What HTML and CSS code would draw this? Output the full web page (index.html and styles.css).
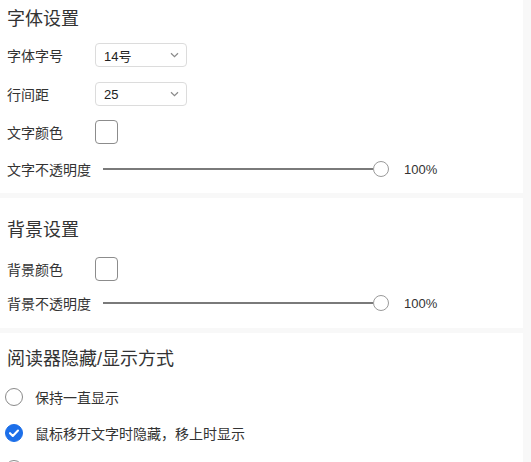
FILE: index.html
```html
<!DOCTYPE html>
<html lang="zh-CN">
<head>
<meta charset="utf-8">
<link rel="stylesheet" href="styles.css">
</head>
<body>
<div class="panel">
  <section class="section sec-font">
    <div class="title">字体设置</div>
    <div class="rows">
      <div class="row tall">
        <span class="label">字体字号</span>
        <div class="select"><span>14号</span><svg class="chev" width="9" height="6" viewBox="0 0 9 6"><path d="M1 1.2 L4.5 4.6 L8 1.2" fill="none" stroke="#8a8a8a" stroke-width="1.2"/></svg></div>
      </div>
      <div class="row tall">
        <span class="label">行间距</span>
        <div class="select"><span>25</span><svg class="chev" width="9" height="6" viewBox="0 0 9 6"><path d="M1 1.2 L4.5 4.6 L8 1.2" fill="none" stroke="#8a8a8a" stroke-width="1.2"/></svg></div>
      </div>
      <div class="row">
        <span class="label">文字颜色</span>
        <div class="swatch"></div>
      </div>
      <div class="row">
        <span class="label-auto">文字不透明度</span>
        <div class="slider"><div class="track"></div><div class="thumb"></div></div>
        <span class="value">100%</span>
      </div>
    </div>
  </section>
  <section class="section sec-bg">
    <div class="title">背景设置</div>
    <div class="rows">
      <div class="row">
        <span class="label">背景颜色</span>
        <div class="swatch"></div>
      </div>
      <div class="row">
        <span class="label-auto">背景不透明度</span>
        <div class="slider"><div class="track"></div><div class="thumb"></div></div>
        <span class="value">100%</span>
      </div>
    </div>
  </section>
  <section class="section sec-mode">
    <div class="title">阅读器隐藏/显示方式</div>
    <div class="rows">
      <div class="radio-row"><span class="radio"></span><span class="radio-text">保持一直显示</span></div>
      <div class="radio-row"><span class="radio checked"><svg width="18" height="18" viewBox="0 0 18 18"><path d="M5 9.2 L7.8 12 L13 6.6" fill="none" stroke="#fff" stroke-width="2.1" stroke-linecap="round" stroke-linejoin="round"/></svg></span><span class="radio-text">鼠标移开文字时隐藏，移上时显示</span></div>
      <div class="radio-row"><span class="radio"></span><span class="radio-text">鼠标移开窗口时隐藏，移上时显示</span></div>
    </div>
  </section>
</div>
</body>
</html>
```
FILE: styles.css
```css
html, body {
  margin: 0;
  padding: 0;
}
body {
  background: #f8f8f8;
  font-family: "Liberation Sans", "Noto Sans CJK SC", sans-serif;
  color: #333;
  height: 462px;
  overflow: hidden;
}
.panel {
  width: 523px;
  display: flex;
  flex-direction: column;
  gap: 5px;
}
.section {
  background: #fff;
  padding-left: 7px;
  padding-right: 7px;
}
.title {
  height: 24px;
  line-height: 24px;
  font-size: 18px;
  color: #333;
}
.rows {
  display: flex;
  flex-direction: column;
}
.sec-font { padding-top: 7px; padding-bottom: 12px; }
.sec-font .rows { gap: 13px; margin-top: 11px; }
.sec-bg { padding-top: 20px; padding-bottom: 13px; }
.sec-bg .rows { gap: 10px; margin-top: 15px; }
.sec-mode { padding-top: 14px; padding-bottom: 20px; }
.sec-mode .rows { gap: 16px; margin-top: 16px; }

.row {
  height: 24px;
  display: flex;
  align-items: center;
  font-size: 14px;
}
.row.tall { height: 26px; }
.label {
  width: 88px;
  flex: none;
}
.label-auto {
  flex: none;
  margin-right: 12px;
}
.select {
  width: 90px;
  height: 22px;
  border: 1px solid #dcdcdc;
  border-radius: 4px;
  display: flex;
  align-items: center;
  justify-content: space-between;
  padding: 0 7px 0 8px;
  box-sizing: border-box;
  width: 92px;
  height: 24px;
  font-size: 13px;
  color: #222;
}
.chev { display: block; }
.swatch {
  width: 23px;
  height: 24px;
  box-sizing: border-box;
  border: 1px solid #8c8c8c;
  border-radius: 4px;
  background: #fff;
}
.slider {
  width: 286px;
  display: flex;
  align-items: center;
}
.track {
  flex: 1;
  height: 2px;
  background: #7a7a7a;
}
.thumb {
  width: 16px;
  height: 16px;
  box-sizing: border-box;
  border: 1.5px solid #9a9a9a;
  border-radius: 50%;
  background: #fff;
  flex: none;
}
.value {
  margin-left: 15px;
  font-size: 13px;
  color: #333;
}
.radio-row {
  height: 20px;
  display: flex;
  align-items: center;
  font-size: 14px;
}
.radio {
  width: 18px;
  height: 18px;
  box-sizing: border-box;
  border: 1.5px solid #8a8a8a;
  border-radius: 50%;
  margin-left: -2px;
  margin-right: 12px;
  flex: none;
  display: flex;
  align-items: center;
  justify-content: center;
}
.radio.checked {
  background: #1c6fe9;
  border-color: #1c6fe9;
}
.radio.checked svg { display: block; flex: none; }
.radio-text { color: #333; }
```
